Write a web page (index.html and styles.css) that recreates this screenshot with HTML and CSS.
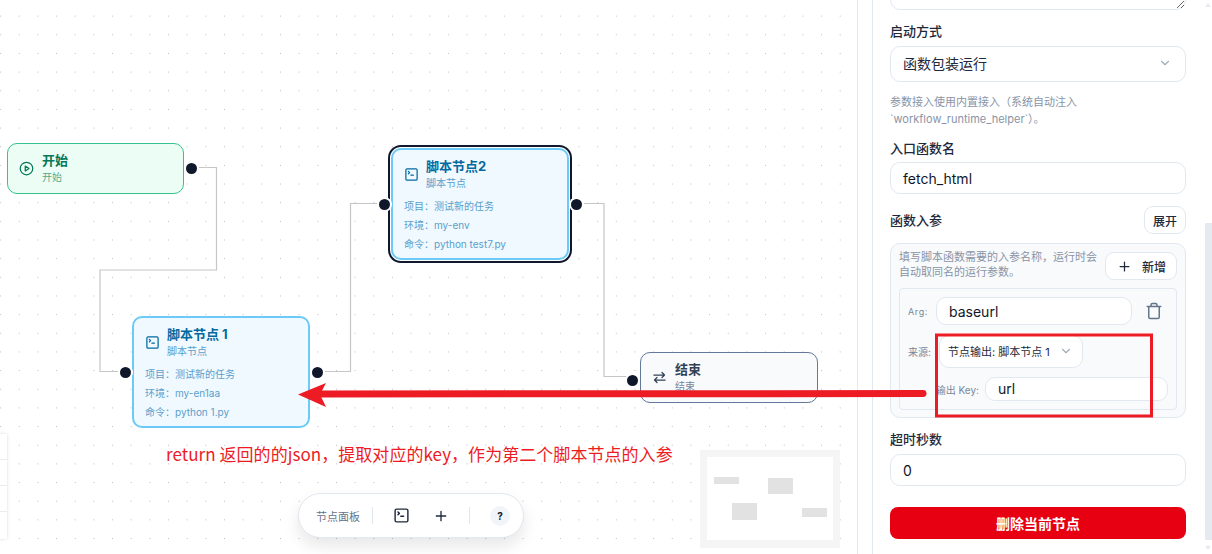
FILE: index.html
```html
<!DOCTYPE html>
<html lang="zh-CN">
<head>
<meta charset="utf-8">
<title>工作流编辑器</title>
<link rel="stylesheet" href="styles.css">
</head>
<body>
<div class="app">
  <main class="canvas">
    <div class="side-table">
      <div class="side-row"></div><div class="side-row"></div><div class="side-row"></div><div class="side-row"></div>
    </div>
    <svg class="edges" width="858" height="554" viewBox="0 0 858 554" fill="none">
      <path d="M191 167.5H216.5V270H100V371.5H125"/>
      <path d="M317 371.5H350.5V203.5H384"/>
      <path d="M576 203.5H604V376.5H632"/>
    </svg>

    <section class="node node-start">
      <span class="handle handle-right"></span>
      <div class="node-head">
        <svg class="node-icon" viewBox="0 0 24 24" fill="none" stroke="currentColor" stroke-width="2" stroke-linecap="round" stroke-linejoin="round"><circle cx="12" cy="12" r="10"/><path d="M10 8l6 4-6 4z"/></svg>
        <div><div class="node-title">开始</div><div class="node-sub">开始</div></div>
      </div>
    </section>

    <section class="node node-script node-one">
      <span class="handle handle-left"></span><span class="handle handle-right"></span>
      <div class="node-head">
        <svg class="node-icon" viewBox="0 0 24 24" fill="none" stroke="currentColor" stroke-width="2" stroke-linecap="round" stroke-linejoin="round"><rect x="3" y="3" width="18" height="18" rx="2"/><path d="M7 11l2-2-2-2M11 13h4"/></svg>
        <div><div class="node-title">脚本节点 1</div><div class="node-sub">脚本节点</div></div>
      </div>
      <div class="node-meta"><div>项目：测试新的任务</div><div>环境：my-en1aa</div><div>命令：python 1.py</div></div>
    </section>

    <section class="node node-script node-two">
      <span class="handle handle-left"></span><span class="handle handle-right"></span>
      <div class="node-head">
        <svg class="node-icon" viewBox="0 0 24 24" fill="none" stroke="currentColor" stroke-width="2" stroke-linecap="round" stroke-linejoin="round"><rect x="3" y="3" width="18" height="18" rx="2"/><path d="M7 11l2-2-2-2M11 13h4"/></svg>
        <div><div class="node-title">脚本节点2</div><div class="node-sub">脚本节点</div></div>
      </div>
      <div class="node-meta"><div>项目：测试新的任务</div><div>环境：my-env</div><div>命令：python test7.py</div></div>
    </section>

    <section class="node node-end">
      <span class="handle handle-left"></span>
      <div class="node-head">
        <svg class="node-icon" viewBox="0 0 24 24" fill="none" stroke="currentColor" stroke-width="2" stroke-linecap="round" stroke-linejoin="round"><path d="M3 8h17M16 4l4 4-4 4M21 16H4M8 12l-4 4 4 4"/></svg>
        <div><div class="node-title">结束</div><div class="node-sub">结束</div></div>
      </div>
    </section>

    <div class="toolbar">
      <span class="toolbar-label">节点面板</span>
      <span class="toolbar-sep"></span>
      <svg class="tool-icon tool-terminal" viewBox="0 0 24 24" fill="none" stroke="currentColor" stroke-width="2" stroke-linecap="round" stroke-linejoin="round"><rect x="3" y="3" width="18" height="18" rx="2"/><path d="M7 11l2-2-2-2M11 13h4"/></svg>
      <svg class="tool-icon tool-plus" viewBox="0 0 24 24" fill="none" stroke="currentColor" stroke-width="2" stroke-linecap="round"><path d="M5 12h14M12 5v14"/></svg>
      <span class="toolbar-sep"></span>
      <span class="help">?</span>
    </div>

    <div class="minimap">
      <svg width="140" height="98" viewBox="0 0 140 98">
        <rect width="140" height="98" fill="#f5f5f5"/>
        <rect x="7" y="7" width="126" height="83" fill="#fff"/>
        <rect x="14" y="27" width="25" height="7" fill="#e2e2e2"/>
        <rect x="68" y="28" width="25" height="16" fill="#e2e2e2"/>
        <rect x="32" y="53" width="25" height="17" fill="#e2e2e2"/>
        <rect x="102" y="58" width="25" height="9" fill="#e2e2e2"/>
      </svg>
    </div>
  </main>

  <aside class="panel">
    <form class="form">
      <textarea class="textarea" aria-label="描述"></textarea>

      <label class="label">启动方式</label>
      <div class="select select-lg">
        <span>函数包装运行</span>
        <svg class="chevron" viewBox="0 0 24 24" fill="none" stroke="currentColor" stroke-width="2" stroke-linecap="round" stroke-linejoin="round"><path d="M6 9l6 6 6-6"/></svg>
      </div>
      <p class="hint">参数接入使用内置接入（系统自动注入<br>`workflow_runtime_helper`）。</p>

      <label class="label label-entry">入口函数名</label>
      <input class="input" value="fetch_html">

      <div class="args-head">
        <span class="label-inline">函数入参</span>
        <button type="button" class="btn-small">展开</button>
      </div>

      <div class="args-box">
        <div class="args-top">
          <p class="args-hint">填写脚本函数需要的入参名称，运行时会自动取同名的运行参数。</p>
          <button type="button" class="btn-add">
            <svg viewBox="0 0 24 24" fill="none" stroke="currentColor" stroke-width="2" stroke-linecap="round"><path d="M5 12h14M12 5v14"/></svg>
            <span>新增</span>
          </button>
        </div>
        <div class="arg-card">
          <div class="arg-row">
            <span class="arg-label arg-label-first">Arg:</span>
            <input class="input input-arg" value="baseurl">
            <svg class="trash" viewBox="0 0 24 24" fill="none" stroke="currentColor" stroke-width="2" stroke-linecap="round" stroke-linejoin="round"><path d="M3 6h18M19 6v14a2 2 0 0 1-2 2H7a2 2 0 0 1-2-2V6M8 6V4a2 2 0 0 1 2-2h4a2 2 0 0 1 2 2v2"/></svg>
          </div>
          <div class="arg-row">
            <span class="arg-label arg-label-source">来源:</span>
            <div class="select select-sm">
              <span>节点输出: 脚本节点 1</span>
              <svg class="chevron" viewBox="0 0 24 24" fill="none" stroke="currentColor" stroke-width="2" stroke-linecap="round" stroke-linejoin="round"><path d="M6 9l6 6 6-6"/></svg>
            </div>
          </div>
          <div class="arg-row arg-row-key">
            <span class="arg-label">输出 Key:</span>
            <input class="input input-key" value="url">
          </div>
        </div>
      </div>

      <label class="label label-timeout">超时秒数</label>
      <input class="input" value="0">

      <button type="button" class="btn-delete">删除当前节点</button>
    </form>
    <div class="scrollbar"><span class="scroll-thumb"></span><span class="scroll-arrow scroll-up"></span><span class="scroll-arrow scroll-down"></span></div>
  </aside>

  <svg class="annotation" width="1212" height="554" viewBox="0 0 1212 554" fill="none">
    <rect x="936.5" y="335" width="215" height="81" stroke="#ed1c24" stroke-width="3"/>
    <path d="M923 393.5L318 394" stroke="#ed1c24" stroke-width="7" stroke-linecap="round"/>
    <path d="M298 394.5L326 383L320 394.5L326 407z" fill="#ed1c24"/>
  </svg>
  <div class="note">return 返回的的json，提取对应的key，作为第二个脚本节点的入参</div>
</div>
</body>
</html>
```
FILE: styles.css
```css
* { box-sizing: border-box; }
html, body { margin: 0; height: 100%; overflow: hidden; background: #fff; }
body { font-family: Inter, "Noto Sans CJK SC", sans-serif; color: #0f172a; }

.app { position: relative; display: flex; width: 1212px; height: 554px; overflow: hidden; }

/* canvas */
.canvas {
  position: relative;
  width: 858px;
  flex: none;
  border-right: 1px solid #e2e8f0;
  background-color: #fff;
  background-image: radial-gradient(circle, #bcbcbc 0.7px, transparent 0.9px);
  background-size: 18.67px 18.67px;
  background-position: -8.7px 6.8px;
  overflow: hidden;
}
.edges { position: absolute; left: 0; top: 0; }
.edges path { stroke: #c6c6c6; stroke-width: 1.2; }

.side-table {
  position: absolute; left: -4px; top: 434px; width: 11px; height: 105px;
  background: #fff; box-shadow: 0 0 3px rgba(0,0,0,.15);
}
.side-row { height: 26px; border-bottom: 1px solid #ececec; }
.side-row:last-child { border-bottom: 0; }

/* nodes */
.node { position: absolute; width: 178px; border-radius: 10px; border: 1.5px solid; padding: 8px 11px; }
.node-head { display: flex; align-items: center; gap: 7px; }
.node-icon { width: 15px; height: 15px; flex: none; }
.node-title { font-size: 13px; line-height: 17px; font-weight: 700; }
.node-sub { font-size: 10px; line-height: 16px; }
.node-meta { margin-top: 6px; font-size: 10px; line-height: 19px; }

.node-start { left: 7px; top: 143px; width: 177px; height: 51px; background: #ecfdf5; border-color: #34c38f; color: #047857; }
.node-start .node-head, .node-end .node-head { gap: 8px; }
.node-start .node-sub { color: #55a98a; }

.node-script { height: 112px; background: #f0f9ff; border: 2px solid #6ccaf8; color: #0369a1; }
.node-script .node-sub, .node-script .node-meta { color: #5b9ecb; }
.node-one { left: 132px; top: 316px; }
.node-two { left: 391px; top: 148px; box-shadow: 0 0 0 1px #fff, 0 0 0 3px #0f172a; }

.node-end { left: 640px; top: 352px; height: 51px; background: #f8fafc; border-color: #64789b; border-width: 1px; color: #334155; }
.node-end .node-sub { color: #7a8799; }

.handle {
  position: absolute; top: 50%; width: 11px; height: 11px; margin-top: -5.5px;
  border-radius: 50%; background: #0f172a; box-shadow: 0 0 0 2px #fff;
}
.handle-left { left: -14px; }
.handle-right { right: -15px; }
.node-start .handle { margin-top: -6px; right: -14px; }
.node-end .handle { margin-top: -1px; top: 47%; }

/* bottom toolbar */
.toolbar {
  position: absolute; left: 298px; top: 493px; width: 226px; height: 45px;
  display: flex; align-items: center; padding-left: 17px;
  background: #fff; border: 1px solid #e2e8f0; border-radius: 23px;
  box-shadow: 0 8px 16px rgba(15,23,42,.1);
}
.toolbar-label { font-size: 11px; color: #64748b; width: 44px; white-space: nowrap; }
.toolbar-sep { width: 1px; height: 17px; background: #e2e8f0; margin-left: 12px; }
.tool-icon { flex: none; color: #1e293b; }
.tool-terminal { width: 17px; height: 17px; margin-left: 20px; }
.tool-plus { width: 16px; height: 16px; margin-left: 23px; margin-right: 8px; }
.toolbar-sep + .help { margin-left: 20px; }
.help {
  width: 20px; height: 20px; border-radius: 50%; background: #f1f5f9;
  display: flex; align-items: center; justify-content: center;
  font-size: 10px; font-weight: 700; color: #0f172a;
}

.minimap { position: absolute; left: 700px; top: 450px; width: 140px; height: 98px; }
.minimap svg { display: block; }

/* panel */
.panel {
  margin-left: 14px; flex: 1; display: flex; min-width: 0;
  border-left: 1px solid #e2e8f0; background: #fff;
}
.form { width: 313px; padding-left: 17px; flex: none; display: block; }
.form > * { width: 296px; }

.textarea {
  display: block; height: 40px; margin: -30px 0 12px; padding: 8px 12px;
  border: 1px solid #e2e8f0; border-radius: 10px; background: #fff; resize: vertical; outline: 0;
}
.label { display: block; font-size: 13px; line-height: 18px; font-weight: 500; color: #1e293b; margin-bottom: 6px; }
.label-entry { margin-top: 12px; margin-bottom: 5px; }
.label-timeout { margin-top: 12px; margin-bottom: 6px; }
.select {
  display: flex; align-items: center; justify-content: space-between;
  border: 1px solid #e2e8f0; border-radius: 10px; background: #fff;
}
.select-lg { height: 36px; padding: 0 13px 2px 12px; font-size: 14px; color: #1e293b; }
.chevron { width: 14px; height: 14px; color: #a3adbb; flex: none; }
.hint { margin: 12px 0 0; font-size: 11px; line-height: 16.5px; color: #8a94a6; white-space: nowrap; }
.input {
  display: block; width: 100%; height: 32px; padding: 0 12px;
  border: 1px solid #e2e8f0; border-radius: 10px; background: #fff; outline: 0;
  font: 400 14px Inter, "Noto Sans CJK SC", sans-serif; color: #0f172a;
}
.args-head { display: flex; align-items: center; justify-content: space-between; margin-top: 12px; }
.label-inline { font-size: 13px; font-weight: 500; color: #1e293b; padding-bottom: 2px; }
.btn-small {
  width: 42px; height: 28px; padding: 0; border: 1px solid #e2e8f0; border-radius: 9px; background: #fff;
  font: 500 12px Inter, "Noto Sans CJK SC", sans-serif; color: #1e293b;
}
.args-box { margin-top: 9px; height: 175px; padding: 8px; border: 1px solid #e2e8f0; border-radius: 10px; background: #f8fafc; }
.args-top { display: flex; justify-content: space-between; align-items: flex-start; }
.args-hint { margin: -2px 0 0; width: 200px; font-size: 11px; line-height: 15px; color: #8a94a6; }
.btn-add {
  width: 72px; height: 28px; padding: 0 0 0 11px; display: flex; align-items: center; gap: 10px; flex: none;
  border: 1px solid #e2e8f0; border-radius: 9px; background: #fff;
  font: 500 12px Inter, "Noto Sans CJK SC", sans-serif; color: #1e293b;
}
.btn-add svg { width: 15px; height: 15px; }
.arg-card { margin-top: 8px; height: 122px; padding: 8px 8px 0; border: 1px solid #e2e8f0; border-radius: 4px; background: #f8fafc; }
.arg-row { display: flex; align-items: center; }
.arg-row + .arg-row { margin-top: 10px; }
.arg-row + .arg-row + .arg-row { margin-top: 9px; }
.arg-label { font-size: 10px; color: #7b8798; white-space: nowrap; }
.arg-label-first { width: 28px; flex: none; letter-spacing: .6px; font-size: 9px; }
.arg-label-source { width: 31px; flex: none; }
.input-arg { width: 196px; height: 28px; }
.trash { width: 18px; height: 18px; margin-left: 13px; color: #64748b; flex: none; }
.select-sm { width: 144px; height: 33px; padding: 0 9px 2px 8px; font-size: 11px; color: #1e293b; white-space: nowrap; }
.arg-row-key { justify-content: flex-end; gap: 6px; padding-right: 0; }
.input-key { width: 183px; height: 24px; padding-bottom: 1px; }
.btn-delete {
  margin-top: 21px; height: 32px; border: 0; border-radius: 8px; background: #e60012; color: #fff;
  font: 700 14px Inter, "Noto Sans CJK SC", sans-serif; display: block;
}

.scrollbar { position: relative; flex: 1; }
.scroll-thumb { position: absolute; right: 0; top: 223px; width: 7px; height: 317px; background: #e5e9f0; }
.scroll-arrow { position: absolute; right: 1px; width: 0; height: 0; border-left: 3px solid transparent; border-right: 3px solid transparent; }
.scroll-up { top: 3px; border-bottom: 4px solid #e5e9f0; }
.scroll-down { top: 546px; border-top: 4px solid #e5e9f0; }

/* annotation overlay */
.annotation { position: absolute; left: 0; top: 0; pointer-events: none; }
.note { position: absolute; left: 166px; top: 443px; font: 400 17px/22px "Noto Sans CJK SC", sans-serif; letter-spacing: .05px; color: #ed1c24; white-space: nowrap; }
```
